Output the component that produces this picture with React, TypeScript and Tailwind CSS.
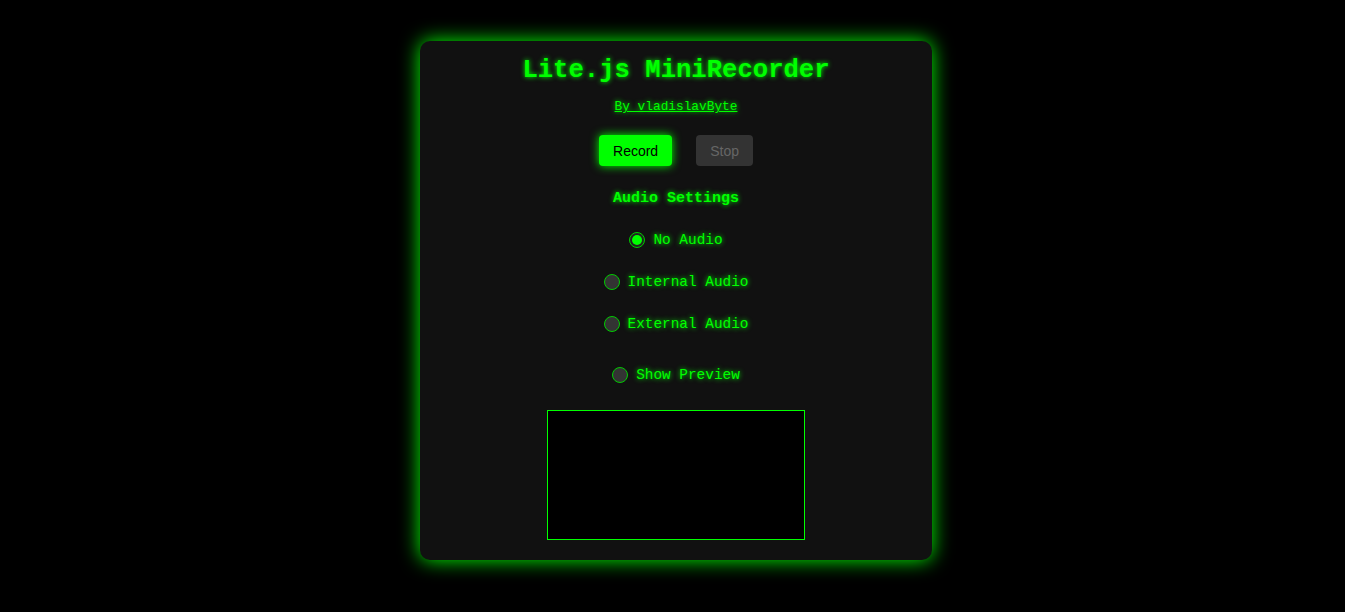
import { useState } from "react";

const mono = "font-['Courier_New','Liberation_Mono',monospace]";
const glow = "[text-shadow:0_0_5px_#00ff00]";

type RadioProps = {
  label: string;
  checked: boolean;
  onChange: () => void;
  className?: string;
};

const Radio = ({ label, checked, onChange, className }: RadioProps) => (
  <label
    onClick={onChange}
    className={`flex items-center h-[20px] cursor-pointer ${className ?? ""}`}
  >
    <span
      className={`w-4 h-4 rounded-full border border-[#00cc00] flex items-center justify-center ${
        checked ? "bg-[#222]" : "bg-[#333]"
      }`}
    >
      {checked && <span className="w-[10px] h-[10px] rounded-full bg-[#00ff00]" />}
    </span>
    <span className={`ml-[8px] text-[14.4px] leading-[20px] text-[#00ff00] ${glow}`}>
      {label}
    </span>
  </label>
);

export default function App() {
  const [audio, setAudio] = useState("none");
  const [preview, setPreview] = useState(false);

  return (
    <div className={`min-h-[612px] bg-black flex justify-center pl-[7px] ${mono}`}>
      <div className="mt-[41px] mb-[52px] w-[512px] h-[519px] bg-[#111] rounded-[10px] shadow-[0_0_20px_#00ff00] flex flex-col items-center pt-[15px] pb-[20px]">
        <h1 className={`text-[25.6px] leading-[30px] font-bold text-[#00ff00] ${glow}`}>
          Lite.js MiniRecorder
        </h1>
        <a
          href="#"
          className={`mt-[13px] text-[12.8px] leading-[16px] text-[#00ff00] underline ${glow}`}
        >
          By vladislavByte
        </a>
        <div className="mt-[20px] flex gap-6 font-['Liberation_Sans',Arial,sans-serif] text-[14px] leading-[16px]">
          <button className="h-[31px] px-[14px] rounded bg-[#00ff00] text-black shadow-[0_0_10px_#00ff00]">
            Record
          </button>
          <button className="h-[31px] px-[14px] rounded bg-[#333] text-[#666]" disabled>
            Stop
          </button>
        </div>
        <h3 className={`mt-[24px] text-[15px] leading-[18px] font-bold text-[#00ff00] ${glow}`}>
          Audio Settings
        </h3>
        <Radio
          className="mt-[22px]"
          label="No Audio"
          checked={audio === "none"}
          onChange={() => setAudio("none")}
        />
        <Radio
          className="mt-[22px]"
          label="Internal Audio"
          checked={audio === "internal"}
          onChange={() => setAudio("internal")}
        />
        <Radio
          className="mt-[22px]"
          label="External Audio"
          checked={audio === "external"}
          onChange={() => setAudio("external")}
        />
        <Radio
          className="mt-[31px]"
          label="Show Preview"
          checked={preview}
          onChange={() => setPreview(!preview)}
        />
        <div className="mt-[25px] w-[258px] h-[130px] border border-[#00ff00] bg-black" />
      </div>
    </div>
  );
}
